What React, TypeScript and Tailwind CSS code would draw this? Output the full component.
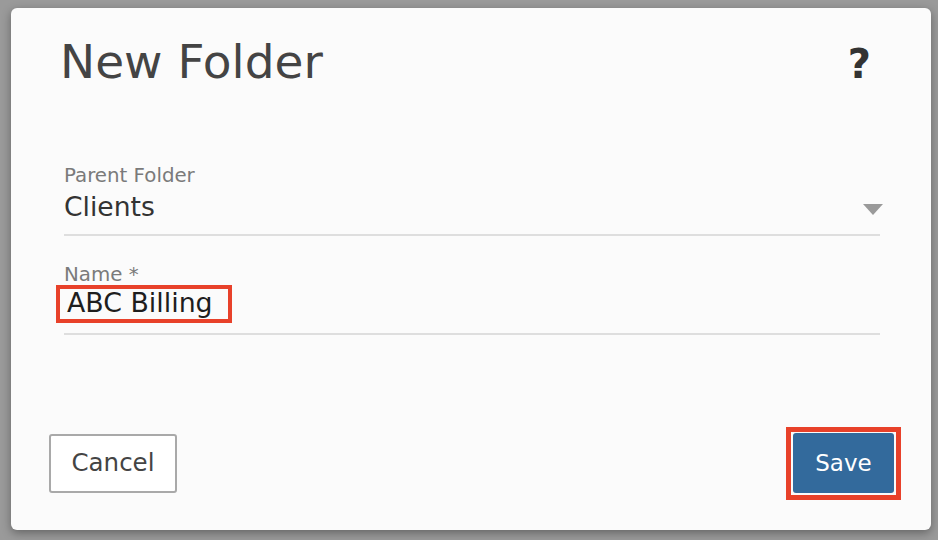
import React from "react";

const font = { fontFamily: '"DejaVu Sans", "Liberation Sans", sans-serif' };

export default function App() {
  return (
    <div
      className="w-[938px] h-[540px] bg-[#9a9a9a] pt-[8px] pl-[11px] pr-[7px] pb-[10px] overflow-hidden"
      style={font}
    >
      <div className="relative h-full bg-[#fbfbfb] rounded-[6px] shadow-[0_3px_10px_rgba(0,0,0,0.35)] flex flex-col">
        <div className="flex items-start justify-between pt-[30px] pl-[49px] pr-[60px]">
          <h1 className="text-[47px] leading-none text-[#444444] font-normal">New Folder</h1>
          <span className="text-[40px] leading-none font-bold text-[#333333] mt-[6px]">?</span>
        </div>

        <div className="pl-[53px] pr-[51px] mt-[81px]">
          <div className="text-[19.8px] leading-none text-[#7a7a7a]">Parent Folder</div>
          <div className="flex items-start justify-between mt-[8px] pb-[14px] border-b-2 border-[#dedede]">
            <span className="text-[26.6px] leading-none text-[#333333]">Clients</span>
            <svg width="20" height="11" viewBox="0 0 20 11" className="mr-[-3px] mt-[10px]">
              <polygon points="0,0 20,0 10,11" fill="#9a9a9a" />
            </svg>
          </div>

          <div className="text-[19.8px] leading-none text-[#7a7a7a] mt-[29px]">Name *</div>
          <div className="relative mt-[5px] pb-[16px] border-b-2 border-[#dedede]">
            <div className="pl-[3px] text-[26.8px] leading-none text-[#1e1e1e]">ABC Billing</div>
            <div className="absolute left-[-8px] top-[-5px] w-[176px] h-[38px] border-[4px] border-[#e8412a]" />
          </div>
        </div>

        <div className="flex-1" />

        <div className="flex items-center justify-between pl-[38px] pr-[37px] pb-[37px]">
          <button className="w-[128px] h-[59px] rounded-[3px] border-2 border-[#a9a9a9] bg-white text-[24.5px] text-[#444444]">
            Cancel
          </button>
          <div className="relative">
            <button className="w-[101px] h-[60px] rounded-[3px] bg-[#336a9c] text-[23px] text-white">
              Save
            </button>
            <div className="absolute left-[-7px] top-[-6px] w-[115px] h-[73px] border-[5px] border-[#e8412a]" />
          </div>
        </div>
      </div>
    </div>
  );
}
